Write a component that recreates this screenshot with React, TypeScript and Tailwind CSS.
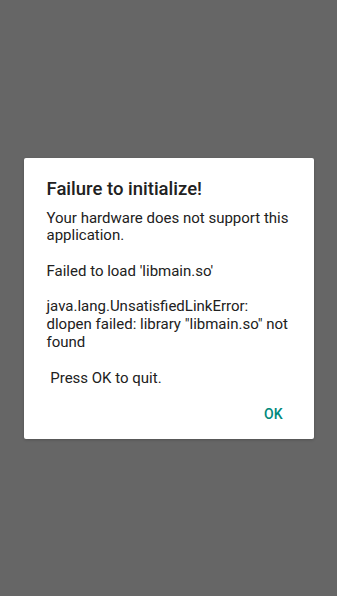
export default function App() {
  return (
    <div className="flex h-[596px] w-full items-center justify-center bg-[#666666] font-['Roboto',sans-serif]">
      <div className="flex h-[281px] w-[290px] flex-col rounded-[2px] bg-white pl-[23px] pr-[20px] pt-[19px] shadow-[0_1px_3px_rgba(0,0,0,0.2)]">
        <h1 className="text-[18.5px] leading-[24px] font-medium text-[#212121]">Failure to initialize!</h1>
        <p className="mt-[9px] whitespace-pre-wrap text-[15px] leading-[17.8px] text-[#212121]">
          {"Your hardware does not support this application.\n\nFailed to load 'libmain.so'\n\njava.lang.UnsatisfiedLinkError: dlopen failed: library \"libmain.so\" not found\n\n Press OK to quit."}
        </p>
        <div className="mt-auto mb-[17px] flex justify-end">
          <button className="pr-[11px] text-[14px] leading-[16px] font-medium text-[#00897b]">OK</button>
        </div>
      </div>
    </div>
  );
}
